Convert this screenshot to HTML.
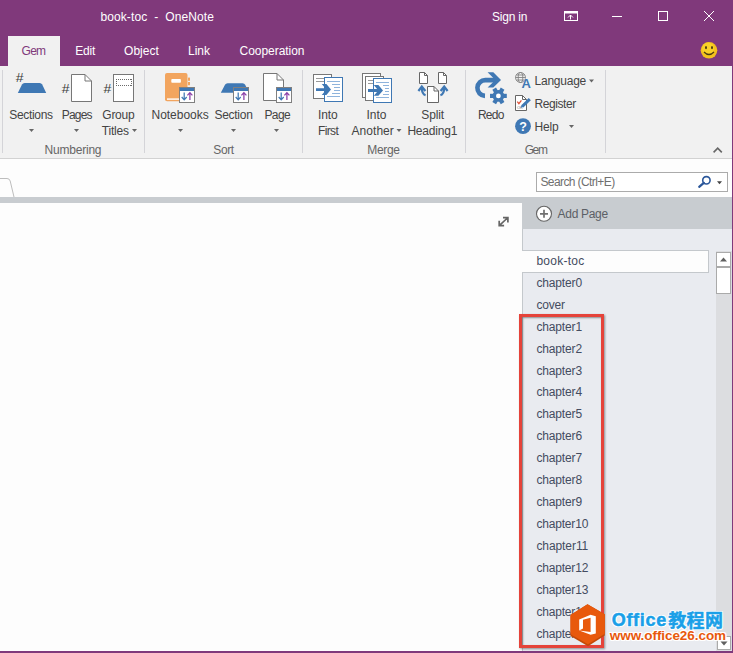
<!DOCTYPE html>
<html><head><meta charset="utf-8"><title>book-toc - OneNote</title>
<style>
html,body{margin:0;padding:0}
body{width:733px;height:653px;position:relative;overflow:hidden;background:#fdfdfd;font-family:"Liberation Sans","Noto Sans CJK SC",sans-serif;}
.t{position:absolute;white-space:pre;font-family:"Liberation Sans","Noto Sans CJK SC",sans-serif;}
.b{position:absolute;box-sizing:border-box}
svg.ic{position:absolute;left:0;top:0;z-index:2}
.t{z-index:1}
.wm{z-index:3}

</style></head>
<body>
<div class="b" style="left:0;top:0;width:733px;height:66px;background:#80397b"></div>
<div class="b" style="left:8px;top:36px;width:52px;height:30px;background:#f1f1f1"></div>
<div class="b" style="left:0;top:66px;width:733px;height:93px;background:#f1f1f1;border-bottom:1px solid #d2d2d2"></div>
<div class="b" style="left:0;top:159px;width:733px;height:38px;background:#fdfdfd"></div>
<div class="b" style="left:0;top:197px;width:733px;height:6px;background:#c8ccd0"></div>
<div class="b" style="left:522px;top:197px;width:211px;height:32px;background:#c8ccd0"></div>
<div class="b" style="left:522px;top:229px;width:211px;height:424px;background:#e9ebf0;border-left:1px solid #c4c8cc"></div>
<div class="b" style="left:716px;top:251px;width:16px;height:400px;background:#dcdde0"></div>
<div class="b" style="left:536px;top:172px;width:192px;height:20px;background:#fff;border:1px solid #ababab"></div>
<div class="b" style="left:522px;top:250px;width:187px;height:23px;background:#fdfdfd;border:1px solid #c4c8cc;border-left:none"></div>
<div class="b" style="left:716px;top:252px;width:15px;height:15px;background:#fff;border:1px solid #aaa"></div>
<div class="b" style="left:716px;top:267px;width:15px;height:27px;background:#fff;border:1px solid #aaa"></div>
<div class="b" style="left:717px;top:636px;width:14px;height:14px;background:#fff;border:1px solid #aaa"></div>
<div class="b" style="left:519px;top:314px;width:85px;height:334px;border:3px solid #e5433a;box-shadow:1px 1px 2px rgba(0,0,0,.4),inset 1px 1px 2px rgba(0,0,0,.4)"></div>
<div class="b" style="left:732px;top:0;width:1px;height:653px;background:#80397b"></div>
<div class="b" style="left:0;top:651px;width:733px;height:2px;background:#80397b"></div>

<svg class="ic" width="733" height="653" viewBox="0 0 733 653" font-family="'Liberation Sans',sans-serif">
<defs>
<g id="badge">
<rect x="0.500" y="0.500" width="15" height="15" fill="#fff" stroke="#808080"/>
<rect x="1" y="1" width="14" height="3" fill="#3f78b4"/>
<path d="M5.200 5.400 V12.600 M2.700 10 L5.200 12.800 L7.700 10" fill="none" stroke="#3f78b4" stroke-width="1.250"/>
<path d="M10.900 13 V5.800 M8.400 8.400 L10.900 5.600 L13.400 8.400" fill="none" stroke="#8a40a8" stroke-width="1.250"/>
</g>
<path id="dd" d="M0 0 H5 L2.5 3 Z" fill="#666"/>
</defs>
<!-- window controls -->
<g stroke="#fff" fill="none" stroke-width="1">
<rect x="564.5" y="11.5" width="13" height="9"/>
<path d="M564 12.5 H578" stroke-width="2"/>
<path d="M570.500 19.500 V15 M568 17.500 L570.500 15 L573 17.500"/>
<path d="M612 16.5 H622"/>
<rect x="658.5" y="11.5" width="9" height="9"/>
<path d="M704 11 L714 21 M714 11 L704 21"/>
</g>
<!-- smiley -->
<circle cx="709" cy="50.3" r="8.3" fill="#f3c21c"/>
<circle cx="708" cy="48.5" r="6" fill="#fbd52e" opacity=".7"/>
<ellipse cx="706" cy="47.6" rx="1" ry="1.6" fill="#4a3a10"/>
<ellipse cx="712" cy="47.6" rx="1" ry="1.6" fill="#4a3a10"/>
<path d="M704 52 Q709 57 714 52" fill="none" stroke="#4a3a10" stroke-width="1.2"/>
<!-- group separators -->
<g stroke="#d4d4d8" stroke-width="1">
<path d="M2.5 70 V153 M144.5 70 V153 M302.5 70 V153 M465.5 70 V153 M605.5 70 V153"/>
</g>
<!-- Numbering: Sections -->
<text x="15.800" y="81.700" font-size="13.500" fill="#3a3a3a" textLength="7.800" lengthAdjust="spacingAndGlyphs">#</text>
<path d="M17.8 93 L22 84.6 Q22.8 83 24.6 83 H39.6 Q41.4 83 42.2 84.6 L46.2 93 Z" fill="#3f78b4"/>
<!-- Pages -->
<text x="61.800" y="92.500" font-size="13.500" fill="#3a3a3a" textLength="7.800" lengthAdjust="spacingAndGlyphs">#</text>
<path d="M71.5 74.5 H85 L91.5 81 V101.5 H71.5 Z" fill="#fff" stroke="#777"/>
<path d="M85 74.5 V81 H91.5" fill="none" stroke="#777"/>
<!-- Group titles -->
<text x="103.500" y="92.500" font-size="13.500" fill="#3a3a3a" textLength="7.800" lengthAdjust="spacingAndGlyphs">#</text>
<rect x="113.5" y="74.5" width="20" height="27" fill="#fff" stroke="#777"/>
<path d="M116 79.500 H132 M116 85.500 H132 M116.500 79 V86 M131.500 79 V86" fill="none" stroke="#6a6a6a" stroke-dasharray="1 1"/>
<!-- dropdown arrows -->
<use href="#dd" x="29" y="129"/>
<use href="#dd" x="74" y="129"/>
<use href="#dd" x="132" y="129"/>
<use href="#dd" x="178" y="129"/>
<use href="#dd" x="231" y="129"/>
<use href="#dd" x="274" y="129"/>
<use href="#dd" x="396.5" y="129"/>
<use href="#dd" x="589" y="79.5"/>
<use href="#dd" x="569" y="125"/>
<!-- Sort: Notebooks -->
<rect x="165" y="73" width="22.5" height="28.3" rx="2" fill="#f2a55f"/>
<rect x="188" y="77.6" width="2" height="3.2" fill="#f2a55f"/>
<rect x="188" y="82" width="2" height="3.2" fill="#f2a55f"/>
<rect x="171.300" y="79.100" width="9.600" height="3.600" rx="0.800" fill="#fff"/>
<rect x="167" y="98.4" width="20.5" height="1.4" fill="#fff"/>
<use href="#badge" x="179" y="87"/>
<!-- Sort: Section -->
<path d="M220.8 92.8 L225 84.8 Q225.8 83.2 227.6 83.2 H242.6 Q244.4 83.2 245.2 84.8 L249 92.8 Z" fill="#3f78b4"/>
<use href="#badge" x="233" y="87"/>
<!-- Sort: Page -->
<path d="M263.5 73.5 H277 L283.5 80 V100.5 H263.5 Z" fill="#fff" stroke="#777"/>
<path d="M277 73.5 V80 H283.5" fill="none" stroke="#777"/>
<use href="#badge" x="276" y="87"/>
<!-- Merge: Into First -->
<rect x="313.5" y="74.5" width="18" height="24" fill="#fff" stroke="#777"/>
<path d="M316 78.5 H324 M316 81.5 H324" stroke="#999" stroke-width="1"/>
<rect x="324.5" y="77.5" width="18" height="24" fill="#fff" stroke="#3f78b4"/>
<path d="M327 81.5 H340 M332 84.5 H340 M334 87.5 H340 M334 90.5 H340 M332 93.5 H340 M327 96.5 H340" stroke="#8fb4dc" stroke-width="1"/>
<path d="M316 88.200 H327 V91.100 H316 Z M321.800 84.100 H326.400 L331 89.600 L326.400 95 H321.800 L326.300 89.600 Z" fill="#3f78b4"/>
<!-- Merge: Into Another -->
<rect x="362.5" y="73.5" width="18" height="24" fill="#fff" stroke="#777"/>
<rect x="365.5" y="76.5" width="18" height="24" fill="#fff" stroke="#777"/>
<path d="M368 80.5 H374 M368 83.5 H374" stroke="#999" stroke-width="1"/>
<rect x="373.5" y="78.5" width="18" height="24" fill="#fff" stroke="#3f78b4"/>
<path d="M376 82.5 H389 M383 85.5 H389 M385 88.5 H389 M385 91.5 H389 M383 94.5 H389 M376 97.5 H389" stroke="#8fb4dc" stroke-width="1"/>
<path d="M368 89 H379 V91.900 H368 Z M373.800 84.900 H378.400 L383 90.400 L378.400 95.800 H373.800 L378.300 90.400 Z" fill="#3f78b4"/>
<!-- Merge: Split Heading1 -->
<path d="M419.5 72.5 H424.5 L427.5 75.5 V83.5 H419.5 Z" fill="#fff" stroke="#666"/>
<path d="M424.5 72.5 V75.5 H427.5" fill="none" stroke="#666"/>
<path d="M438.5 72.5 H443.5 L446.5 75.5 V83.5 H438.5 Z" fill="#fff" stroke="#666"/>
<path d="M443.5 72.5 V75.5 H446.5" fill="none" stroke="#666"/>
<path d="M427.5 86.5 H434 L438.5 91 V102.500 H427.5 Z" fill="#fff" stroke="#666"/>
<path d="M434 86.5 V91 H438.5" fill="none" stroke="#666"/>
<path d="M425.600 95.200 Q421.800 94 421.800 87.400 M418.400 91 L421.800 86.600 L425.400 91" fill="none" stroke="#3f78b4" stroke-width="2.200"/>
<path d="M440.400 95.200 Q444.200 94 444.200 87.400 M440.600 91 L444.200 86.600 L447.600 91" fill="none" stroke="#3f78b4" stroke-width="2.200"/>
<!-- Gem: Redo -->
<path d="M485 95.900 A7.900 7.900 0 1 1 485.6 80.100 H496" fill="none" stroke="#3f78b4" stroke-width="4.600"/>
<path d="M487.600 72.200 H493.300 L501 79.900 L493.300 87.600 H487.600 L495.300 79.900 Z" fill="#3f78b4"/>
<g transform="translate(498.4 95.900)" fill="#3f78b4">
<circle r="5.900"/>
<g id="teeth"><rect x="-8.400" y="-2.100" width="16.800" height="4.200"/></g>
<use href="#teeth" transform="rotate(60)"/>
<use href="#teeth" transform="rotate(120)"/>
<circle r="2.400" fill="#fff"/>
</g>
<!-- Gem: Language -->
<g fill="none" stroke="#777" stroke-width="0.800">
<circle cx="520.5" cy="77.500" r="5"/>
<ellipse cx="520.5" cy="77.500" rx="2.300" ry="5"/>
<path d="M515.500 77.500 H525.500 M516.300 75 H524.700 M516.300 80 H524.700"/>
</g>
<text x="521.600" y="87.600" font-size="13" font-weight="700" fill="#3f78b4" stroke="#f1f1f1" stroke-width="0.600" paint-order="stroke">A</text>
<!-- Gem: Register -->
<path d="M515.500 95.500 H522.500 L526.500 99.500 V110.500 H515.500 Z" fill="#fff" stroke="#666"/>
<path d="M522.500 95.500 V99.500 H526.500" fill="none" stroke="#666"/>
<path d="M517.300 101.600 L518.900 103.600 L521.400 100.400" fill="none" stroke="#e0533a" stroke-width="1.300"/>
<text x="517" y="108.800" font-size="4" fill="#777">OK</text>
<path d="M529.800 99.200 L522.300 106.300" stroke="#3f78b4" stroke-width="3" stroke-linecap="butt"/>
<path d="M521.700 105 L523.600 107 L520.700 107.800 Z" fill="#3f78b4"/>
<!-- Gem: Help -->
<circle cx="523" cy="126.200" r="7.900" fill="#3f78b4"/>
<text x="523" y="130.700" font-size="12.500" font-weight="700" fill="#fff" text-anchor="middle">?</text>
<!-- collapse chevron -->
<path d="M713.600 152.400 L717.700 148.200 L721.800 152.400" fill="none" stroke="#666" stroke-width="1.600"/>
<!-- section tab stub -->
<path d="M0 178.500 H7 Q9.500 178.500 10.200 181 L14 197" fill="none" stroke="#bdbdbd"/>
<!-- search icons -->
<circle cx="706.400" cy="180.300" r="3.700" fill="none" stroke="#2b579a" stroke-width="1.600"/>
<path d="M703.800 182.800 L699.200 186.800" stroke="#2b579a" stroke-width="2.200" stroke-linecap="round"/>
<path d="M717 181.200 H722 L719.500 184.200 Z" fill="#444"/>
<!-- expand -->
<path d="M499.800 225.200 L507.400 218 M503 217.600 H507.900 V222.500 M499.200 220.800 V225.700 H504.100" fill="none" stroke="#666" stroke-width="1.700"/>
<!-- add page -->
<circle cx="544" cy="213.800" r="7.500" fill="#fff" stroke="#666" stroke-width="1.100"/>
<path d="M540 213.800 H548 M544 209.800 V217.800" stroke="#707070" stroke-width="1.700"/>
<!-- scrollbar arrows -->
<path d="M720 261.500 H727 L723.500 257.500 Z" fill="#606060"/>
<path d="M720.500 641.500 H727.500 L724 645.500 Z" fill="#606060"/>
<!-- watermark logo -->
<path d="M587.5 604.2 L604.8 614.2 V635.6 L588 646.2 L570.5 636 V615 Z" fill="#c44a08"/>
<path d="M587.5 604.2 L604.8 614.2 V633.8 L588 644.2 L570.5 634.2 V615 Z" fill="#e8590c"/>
<path d="M579.2 619.6 L590.6 614.8 L595.8 616.2 V633.4 L590.6 634.8 L579.2 630.6 L590.6 632 V617.800 L583 619.800 V628.600 L579.2 630.600 Z" fill="#fff"/>
</svg>

<span class="t" style="left:100.4px;top:9.83px;font-size:12px;line-height:14px;color:#fff;letter-spacing:0.115px;">book-toc  -  OneNote</span>
<span class="t" style="left:492px;top:9.53px;font-size:12px;line-height:14px;color:#fff;letter-spacing:-0.2px;">Sign in</span>
<span class="t" style="left:21.6px;top:43.63px;font-size:12px;line-height:14px;color:#80397b;letter-spacing:-0.772px;">Gem</span>
<span class="t" style="left:75.3px;top:43.63px;font-size:12px;line-height:14px;color:#fff;letter-spacing:-0.247px;">Edit</span>
<span class="t" style="left:124px;top:43.63px;font-size:12px;line-height:14px;color:#fff;letter-spacing:0.052px;">Object</span>
<span class="t" style="left:188px;top:43.63px;font-size:12px;line-height:14px;color:#fff;letter-spacing:-0.004px;">Link</span>
<span class="t" style="left:239.5px;top:43.63px;font-size:12px;line-height:14px;color:#fff;letter-spacing:-0.036px;">Cooperation</span>
<span class="t" style="left:9.2px;top:108.03px;font-size:12px;line-height:14px;color:#444;letter-spacing:-0.304px;">Sections</span>
<span class="t" style="left:61.8px;top:108.03px;font-size:12px;line-height:14px;color:#444;letter-spacing:-0.826px;">Pages</span>
<span class="t" style="left:102.3px;top:108.03px;font-size:12px;line-height:14px;color:#444;letter-spacing:-0.252px;">Group</span>
<span class="t" style="left:101.7px;top:124.03px;font-size:12px;line-height:14px;color:#444;letter-spacing:-0.172px;">Titles</span>
<span class="t" style="left:44.6px;top:143.03px;font-size:12px;line-height:14px;color:#666;letter-spacing:-0.223px;">Numbering</span>
<span class="t" style="left:151.5px;top:108.03px;font-size:12px;line-height:14px;color:#444;letter-spacing:-0.019px;">Notebooks</span>
<span class="t" style="left:214.4px;top:108.03px;font-size:12px;line-height:14px;color:#444;letter-spacing:-0.262px;">Section</span>
<span class="t" style="left:264.4px;top:108.03px;font-size:12px;line-height:14px;color:#444;letter-spacing:-0.558px;">Page</span>
<span class="t" style="left:213.3px;top:143.03px;font-size:12px;line-height:14px;color:#666;letter-spacing:-0.379px;">Sort</span>
<span class="t" style="left:317.9px;top:108.03px;font-size:12px;line-height:14px;color:#444;letter-spacing:-0.079px;">Into</span>
<span class="t" style="left:317.9px;top:124.03px;font-size:12px;line-height:14px;color:#444;letter-spacing:-0.586px;">First</span>
<span class="t" style="left:366.6px;top:108.03px;font-size:12px;line-height:14px;color:#444;letter-spacing:-0.079px;">Into</span>
<span class="t" style="left:351.5px;top:124.03px;font-size:12px;line-height:14px;color:#444;letter-spacing:0.053px;">Another</span>
<span class="t" style="left:421.3px;top:108.03px;font-size:12px;line-height:14px;color:#444;letter-spacing:-0.169px;">Split</span>
<span class="t" style="left:407.4px;top:124.03px;font-size:12px;line-height:14px;color:#444;letter-spacing:-0.197px;">Heading1</span>
<span class="t" style="left:367.3px;top:143.03px;font-size:12px;line-height:14px;color:#666;letter-spacing:-0.323px;">Merge</span>
<span class="t" style="left:477.9px;top:108.03px;font-size:12px;line-height:14px;color:#444;letter-spacing:-0.747px;">Redo</span>
<span class="t" style="left:534.6px;top:74.33px;font-size:12px;line-height:14px;color:#444;letter-spacing:-0.249px;">Language</span>
<span class="t" style="left:534.6px;top:97.03px;font-size:12px;line-height:14px;color:#444;letter-spacing:-0.436px;">Register</span>
<span class="t" style="left:534.6px;top:119.63px;font-size:12px;line-height:14px;color:#444;letter-spacing:-0.222px;">Help</span>
<span class="t" style="left:524.7px;top:143.03px;font-size:12px;line-height:14px;color:#666;letter-spacing:-1.405px;">Gem</span>
<span class="t" style="left:540.4px;top:175.03px;font-size:12px;line-height:14px;color:#707070;letter-spacing:-0.589px;">Search (Ctrl+E)</span>
<span class="t" style="left:557.6px;top:206.83px;font-size:12px;line-height:14px;color:#5c6066;letter-spacing:-0.315px;">Add Page</span>
<span class="t" style="left:536.4px;top:253.73px;font-size:12px;line-height:14px;color:#444c60;letter-spacing:0.246px;">book-toc</span>
<span class="t" style="left:536.4px;top:275.69px;font-size:12px;line-height:14px;color:#444c60;letter-spacing:-0.138px;">chapter0</span>
<span class="t" style="left:536.4px;top:297.65px;font-size:12px;line-height:14px;color:#444c60;letter-spacing:-0.209px;">cover</span>
<span class="t" style="left:536.4px;top:319.61px;font-size:12px;line-height:14px;color:#444c60;letter-spacing:-0.138px;">chapter1</span>
<span class="t" style="left:536.4px;top:341.57px;font-size:12px;line-height:14px;color:#444c60;letter-spacing:-0.138px;">chapter2</span>
<span class="t" style="left:536.4px;top:363.53px;font-size:12px;line-height:14px;color:#444c60;letter-spacing:-0.138px;">chapter3</span>
<span class="t" style="left:536.4px;top:385.49px;font-size:12px;line-height:14px;color:#444c60;letter-spacing:-0.138px;">chapter4</span>
<span class="t" style="left:536.4px;top:407.45px;font-size:12px;line-height:14px;color:#444c60;letter-spacing:-0.138px;">chapter5</span>
<span class="t" style="left:536.4px;top:429.41px;font-size:12px;line-height:14px;color:#444c60;letter-spacing:-0.138px;">chapter6</span>
<span class="t" style="left:536.4px;top:451.37px;font-size:12px;line-height:14px;color:#444c60;letter-spacing:-0.138px;">chapter7</span>
<span class="t" style="left:536.4px;top:473.33px;font-size:12px;line-height:14px;color:#444c60;letter-spacing:-0.138px;">chapter8</span>
<span class="t" style="left:536.4px;top:495.29px;font-size:12px;line-height:14px;color:#444c60;letter-spacing:-0.138px;">chapter9</span>
<span class="t" style="left:536.4px;top:517.25px;font-size:12px;line-height:14px;color:#444c60;letter-spacing:-0.175px;">chapter10</span>
<span class="t" style="left:536.4px;top:539.21px;font-size:12px;line-height:14px;color:#444c60;letter-spacing:-0.076px;">chapter11</span>
<span class="t" style="left:536.4px;top:561.17px;font-size:12px;line-height:14px;color:#444c60;letter-spacing:-0.175px;">chapter12</span>
<span class="t" style="left:536.4px;top:583.13px;font-size:12px;line-height:14px;color:#444c60;letter-spacing:-0.175px;">chapter13</span>
<span class="t" style="left:536.4px;top:605.09px;font-size:12px;line-height:14px;color:#444c60;letter-spacing:-0.175px;">chapter14</span>
<span class="t" style="left:536.4px;top:627.05px;font-size:12px;line-height:14px;color:#444c60;letter-spacing:-0.175px;">chapter15</span>
<span class="t" style="left:611.7px;top:610.05px;font-size:18px;line-height:20px;color:#1a9fe8;letter-spacing:0.697px;font-weight:700;z-index:3;text-shadow:1px 0 0 #fff,-1px 0 0 #fff,0 1px 0 #fff,0 -1px 0 #fff,1px 1px 0 #fff,-1px -1px 0 #fff,1px -1px 0 #fff,-1px 1px 0 #fff;-webkit-text-stroke:0.5px #1a9fe8;">Office</span>
<span class="t" style="left:668.2px;top:610.55px;font-size:18px;line-height:20px;color:#1a9fe8;letter-spacing:0.4px;font-weight:700;z-index:3;text-shadow:1px 0 0 #fff,-1px 0 0 #fff,0 1px 0 #fff,0 -1px 0 #fff,1px 1px 0 #fff,-1px -1px 0 #fff,1px -1px 0 #fff,-1px 1px 0 #fff;-webkit-text-stroke:0.5px #1a9fe8;">教程网</span>
<span class="t" style="left:609.8px;top:628.39px;font-size:13.5px;line-height:15.5px;color:#e8590c;letter-spacing:-0.068px;font-weight:700;z-index:3;text-shadow:1px 0 0 #fff,-1px 0 0 #fff,0 1px 0 #fff,0 -1px 0 #fff,1px 1px 0 #fff,-1px -1px 0 #fff,1px -1px 0 #fff,-1px 1px 0 #fff;">www.office26.com</span>
</body></html>
